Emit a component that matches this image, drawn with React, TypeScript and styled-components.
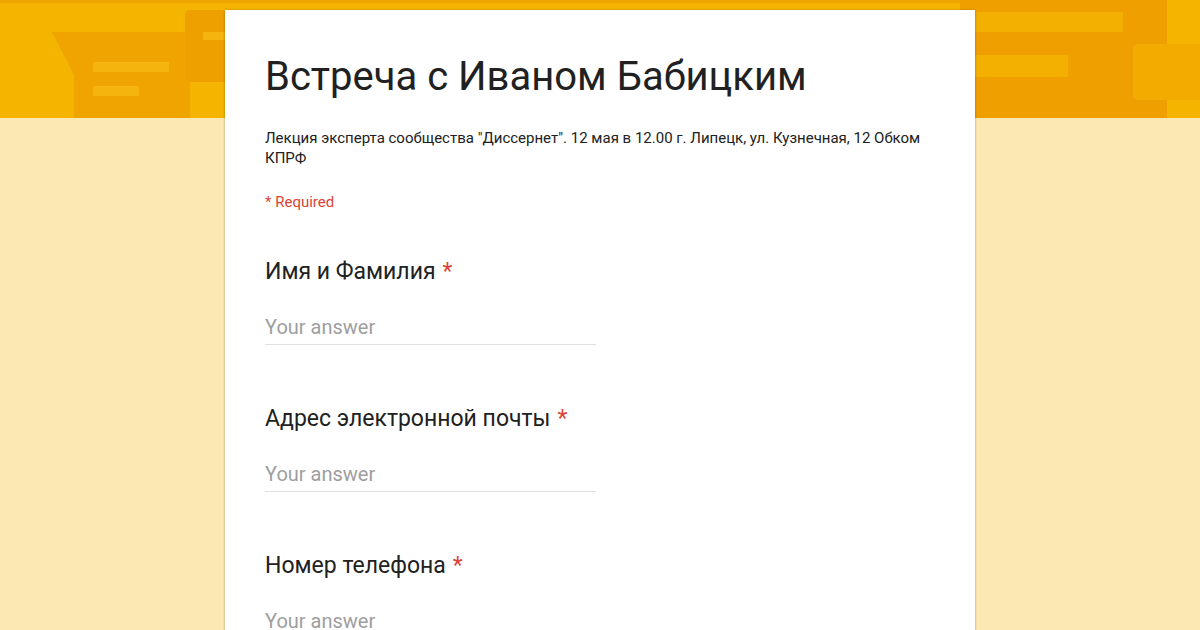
import React from "react";
import styled, { createGlobalStyle } from "styled-components";

const Global = createGlobalStyle`
  html, body { margin: 0; padding: 0; }
  body {
    background: #fce8b2;
    font-family: Roboto, "Noto Sans", Arial, sans-serif;
    overflow: hidden;
  }
`;

const Page = styled.div`
  width: 1200px;
  height: 630px;
  background: #fce8b2;
  overflow: hidden;
`;

const Banner = styled.header`
  height: 118px;
  background: #f4b400;
  overflow: hidden;
  svg { display: block; }
`;

const Card = styled.main`
  position: relative;
  width: 750px;
  margin: -108px auto 0;
  background: #fff;
  box-shadow: 0 0 2px rgba(0, 0, 0, 0.25), 0 2px 3px rgba(0, 0, 0, 0.12);
  padding: 43px 40px 40px;
  box-sizing: border-box;
  min-height: 640px;
`;

const Title = styled.h1`
  margin: 0;
  font-family: Roboto, sans-serif;
  font-weight: 400;
  font-size: 40px;
  line-height: 48px;
  color: #212121;
`;

const Description = styled.p`
  margin: 27px 0 0;
  font-size: 15px;
  line-height: 20px;
  color: #212121;
`;

const Required = styled.div`
  margin-top: 24px;
  font-size: 15px;
  line-height: 20px;
  color: #db4437;
`;

const Question = styled.section`
  margin-top: 45px;
  & + & { margin-top: 59px; }
`;

const Label = styled.div`
  font-size: 23px;
  line-height: 30px;
  color: #212121;
`;

const Star = styled.span`
  color: #db4437;
  margin-left: 7px;
`;

const AnswerField = styled.div`
  width: 331px;
  margin-top: 27px;
  border-bottom: 1px solid #e0e0e0;
  padding-bottom: 4px;
  font-size: 20px;
  line-height: 26px;
  color: #9e9e9e;
`;

const BannerArt = () => (
  <svg width="1200" height="118" viewBox="0 0 1200 118">
    <rect width="1200" height="118" fill="#f4b400" />
    <rect width="1200" height="3" fill="#eea400" />
    {/* left decoration */}
    <path d="M52 32 H190 V118 H74 V75 Z" fill="#f0a400" />
    <rect x="185" y="10" width="60" height="72" rx="5" fill="#eea000" />
    <rect x="93" y="62" width="76" height="10" fill="#f5b40e" />
    <rect x="93" y="86" width="46" height="10" fill="#f5b40e" />
    <rect x="203" y="32" width="40" height="8" fill="#f5b40e" />
    {/* right decoration */}
    <rect x="960" y="0" width="207" height="118" fill="#efa000" />
    <rect x="960" y="12" width="163" height="20" fill="#f4b000" />
    <rect x="960" y="55" width="108" height="22" fill="#f4b000" />
    <rect x="1167" y="0" width="33" height="118" fill="#f4b400" />
    <rect x="1133" y="44" width="80" height="56" rx="5" fill="#f2ac00" />
  </svg>
);

const questions = ["Имя и Фамилия", "Адрес электронной почты", "Номер телефона"];

export default function App() {
  return (
    <Page>
      <Global />
      <Banner>
        <BannerArt />
      </Banner>
      <Card>
        <Title>Встреча с Иваном Бабицким</Title>
        <Description>
          Лекция эксперта сообщества "Диссернет". 12 мая в 12.00 г. Липецк, ул. Кузнечная, 12 Обком КПРФ
        </Description>
        <Required>* Required</Required>
        {questions.map((q) => (
          <Question key={q}>
            <Label>
              {q}
              <Star>*</Star>
            </Label>
            <AnswerField>Your answer</AnswerField>
          </Question>
        ))}
      </Card>
    </Page>
  );
}
